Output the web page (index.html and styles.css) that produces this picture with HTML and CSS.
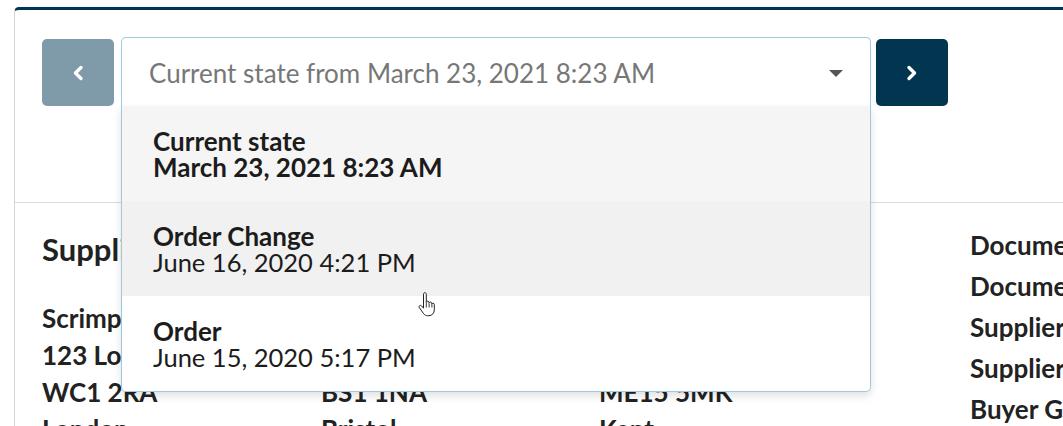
FILE: index.html
```html
<!DOCTYPE html>
<html lang="en">
<head>
    <meta charset="UTF-8">
    <meta name="viewport" content="width=device-width, initial-scale=1.0">
    <title>Order History</title>
    <link rel="stylesheet" href="styles.css">
</head>
<body>

    <div class="card">
        <div class="toolbar">
            <button class="nav-btn prev" aria-label="Previous version">
                <svg width="12" height="16" viewBox="0 0 12 16"><polyline points="9,2.5 3.5,8 9,13.5" fill="none" stroke="#fff" stroke-width="3.4" stroke-linecap="round" stroke-linejoin="round"/></svg>
            </button>

            <div class="select open">
                <div class="select-box">
                    <span class="select-value">Current state from March 23, 2021 8:23 AM</span>
                    <span class="caret"></span>
                </div>
                <ul class="menu">
                    <li class="option selected">
                        <span class="option-title">Current state</span>
                        <span class="option-date">March 23, 2021 8:23 AM</span>
                    </li>
                    <li class="option hover">
                        <span class="option-title">Order Change</span>
                        <span class="option-date">June 16, 2020 4:21 PM</span>
                    </li>
                    <li class="option">
                        <span class="option-title">Order</span>
                        <span class="option-date">June 15, 2020 5:17 PM</span>
                    </li>
                </ul>
            </div>

            <button class="nav-btn next" aria-label="Next version">
                <svg width="12" height="16" viewBox="0 0 12 16"><polyline points="3,2.5 8.5,8 3,13.5" fill="none" stroke="#fff" stroke-width="3.4" stroke-linecap="round" stroke-linejoin="round"/></svg>
            </button>
        </div>

        <div class="details">
            <div class="party">
                <h3>Supplier</h3>
                <p>Scrimpton Supplies Ltd</p>
                <p>123 London Road</p>
                <p>WC1 2RA</p>
                <p>London</p>
            </div>
            <div class="party">
                <h3>Buyer</h3>
                <p>Harbour Foods Ltd</p>
                <p>1 Harbour Street</p>
                <p>BS1 1NA</p>
                <p>Bristol</p>
            </div>
            <div class="party">
                <h3>Delivery</h3>
                <p>Main Warehouse</p>
                <p>12 Mill Lane</p>
                <p>ME15 5MK</p>
                <p>Kent</p>
            </div>
            <div class="meta">
                <p>Document Number</p>
                <p>Document Date</p>
                <p>Supplier Code</p>
                <p>Supplier GLN</p>
                <p>Buyer GLN</p>
            </div>
        </div>
    </div>

    <svg class="cursor" width="18" height="26" viewBox="0 0 18 26">
        <path d="M5.5 2.2c0-.9.6-1.5 1.4-1.5s1.4.6 1.4 1.5v8.3c.2-.9.8-1.3 1.4-1.3.8 0 1.3.6 1.3 1.4v.6c.2-.8.8-1.2 1.4-1.2.8 0 1.3.6 1.3 1.4v.8c.2-.7.7-1 1.3-1 .8 0 1.3.6 1.3 1.4v5.2c0 3.3-2.2 5.9-5.4 5.9H9.6c-1.8 0-3.1-.8-4.1-2.2L1.3 15.6c-.5-.7-.3-1.6.4-2 .6-.4 1.4-.3 1.9.3l1.9 2.3z" fill="#fff" stroke="#222" stroke-width="1" stroke-linejoin="round"/>
        <path d="M8.3 11v4.5M11.1 11.5v4M13.9 12.3v3.2" stroke="#222" stroke-width="0.9" fill="none"/>
    </svg>

</body>
</html>
```

FILE: styles.css
```css
body {
    margin: 0;
    font-family: Lato, "Open Sans", Arial, sans-serif;
    background-color: #fff;
    color: #222;
    overflow: hidden;
    position: relative;
}

.card {
    margin: 7px -40px 0 14px;
    border-top: 3px solid #023550;
    border-left: 1px solid #d4d4d4;
    border-radius: 5px 0 0 0;
    background: #fff;
}

.toolbar {
    display: flex;
    align-items: flex-start;
    height: 193px;
    box-sizing: border-box;
    padding: 27px 0 0 27px;
    border-bottom: 1px solid #dcdcdc;
}

.nav-btn {
    width: 72px;
    height: 67px;
    margin-top: 2px;
    border: none;
    border-radius: 5px;
    display: flex;
    align-items: center;
    justify-content: center;
    padding: 0;
    cursor: pointer;
}

.nav-btn.prev {
    background-color: #7f9ba9;
    margin-right: 7px;
}

.nav-btn.next {
    background-color: #023550;
    margin-left: 5px;
}

.select {
    position: relative;
    width: 750px;
    z-index: 2;
}

.select-box {
    height: 69px;
    box-sizing: border-box;
    border: 1px solid #9dcbdd;
    border-bottom: none;
    border-radius: 5px 5px 0 0;
    background: #fff;
    display: flex;
    align-items: center;
    justify-content: space-between;
    padding: 2px 27px 0 27px;
}

.select-value {
    font-size: 26px;
    line-height: 25px;
    color: #777;
}

.caret {
    width: 0;
    height: 0;
    border-left: 7px solid transparent;
    border-right: 7px solid transparent;
    border-top: 7px solid #555;
}

.menu {
    position: absolute;
    top: 100%;
    left: 0;
    right: 0;
    margin: 0;
    padding: 0;
    list-style: none;
    background: #fff;
    border: 1px solid #9dcbdd;
    border-top: none;
    border-radius: 0 0 5px 5px;
    box-shadow: 0 4px 8px rgba(0, 0, 0, 0.12);
    overflow: hidden;
}

.option {
    display: flex;
    flex-direction: column;
    padding: 22px 31px 21px;
    font-size: 26px;
    line-height: 26px;
    color: #1c1c1c;
}

.option.selected {
    background-color: #f5f5f5;
}

.option.hover {
    background-color: #f1f1f1;
}

.option-title {
    font-weight: bold;
}

.option-date {
    font-size: 25.5px;
}

.option.selected .option-date {
    font-size: 26px;
    font-weight: bold;
}

.details {
    display: grid;
    grid-template-columns: 279px 278px 371px 1fr;
    padding: 22px 0 0 27px;
    white-space: nowrap;
}

.party {
    padding-top: 8px;
}

.party h3 {
    margin: 0 0 35px;
    font-size: 31px;
    line-height: 32px;
    font-weight: bold;
}

.party p {
    margin: 0;
    font-size: 26px;
    line-height: 37px;
    font-weight: bold;
}

.meta p {
    margin: 0;
    font-size: 26px;
    line-height: 41px;
    font-weight: bold;
}

.cursor {
    position: absolute;
    left: 418px;
    top: 292px;
    z-index: 5;
}
```
